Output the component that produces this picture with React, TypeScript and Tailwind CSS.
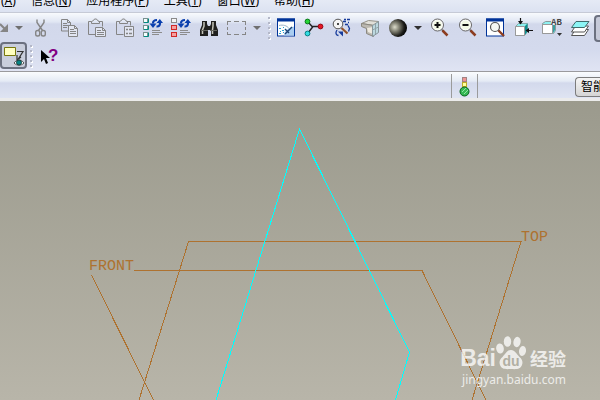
import React from 'react';

interface IconProps {
    children: React.ReactNode;
    crisp?: boolean;
}

const Icon: React.FC<IconProps> = ({ children, crisp = false }) => (
    <svg width="20" height="20" viewBox="0 0 20 20" fill="none" shapeRendering={crisp ? 'crispEdges' : 'auto'} aria-hidden="true">
        {children}
    </svg>
);

const Swap = () => (
    <g>
        <path d="M10 5.500C10 3 11.500 2 14 2" stroke="#0a3fae" strokeWidth="2.200" />
        <path d="M6.500 5.500h7l-3.500 4.500z" fill="#0a3fae" />
        <path d="M13.500 8.500c2.500.2 3.500-1 3.500-3.500" stroke="#0a3fae" strokeWidth="2.200" />
        <path d="M13.500 5h6.500l-3.200-4z" fill="#0a3fae" />
        <path d="M9 12.500h8M9 14.500h10M9 16.500h7" stroke="#8c8c8c" shapeRendering="crispEdges" />
    </g>
);

const Lens = () => (
    <g>
        <path d="M11.500 11.500l2.500 2" stroke="#555" strokeWidth="1.500" />
        <path d="M12.500 12.500l5 5" stroke="#8c3d20" strokeWidth="2.500" />
        <circle cx="7.500" cy="7" r="6" fill="#fff" stroke="#666" />
        <circle cx="7.500" cy="7" r="4.500" fill="#f2f8e4" />
    </g>
);

const editIcons = [
    {
        label: '剪切',
        icon: (
            <Icon>
                <path d="M6 1.500v3l5.500 8M13 1.500v3l-5.500 8" stroke="#858585" strokeWidth="1.400" />
                <rect x="4.700" y="12.500" width="4" height="5.500" rx="1.800" stroke="#858585" strokeWidth="1.400" />
                <rect x="10.300" y="12.500" width="4" height="5.500" rx="1.800" stroke="#858585" strokeWidth="1.400" />
            </Icon>
        ),
    },
    {
        label: '复制',
        icon: (
            <Icon>
                <path d="M2.500 1.500h6l3 3v8.500h-9zM8.500 1.500v3h3M4 5.500h4M4 7.500h6M4 9.500h4" stroke="#858585" />
                <path d="M9.500 7.500h6l3 3v8h-9z" fill="#e2e6f2" stroke="#858585" />
                <path d="M15.500 7.500v3h3M11 11.500h4M11 13.500h6M11 15.500h6" stroke="#858585" />
            </Icon>
        ),
    },
    {
        label: '粘贴',
        icon: (
            <Icon>
                <path d="M4.500 3.500h-3v13h7M11.500 3.500h4v5M4.500 5.500v-2l2-1 1-1.500h2l1 1.500 2 1v2z" stroke="#858585" />
                <path d="M8.500 9.500h7l3 3v6h-10z" fill="#e2e6f2" stroke="#858585" />
                <path d="M15.500 9.500v3h3M10 12.500h4M10 14.500h7M10 16.500h7" stroke="#858585" />
            </Icon>
        ),
    },
    {
        label: '选择性粘贴',
        icon: (
            <Icon>
                <path d="M4.500 3.500h-3v13h7M11.500 3.500h4v4M4.500 5.500v-2l2-1 1-1.500h2l1 1.500 2 1v2z" stroke="#858585" />
                <path d="M9.500 8.500h9v10h-9z" fill="#e2e6f2" stroke="#858585" />
                <path d="M11 11.500h2M14 11.500h3M14 15.500h3M11 15.500h2" stroke="#858585" strokeWidth="1.600" />
            </Icon>
        ),
    },
    {
        label: '再生',
        icon: (
            <Icon>
                {[0.5, 7.5, 14.5].map((y) => (
                    <g key={y}>
                        <rect x="0.500" y={y} width="4" height="4" fill="#f4ffff" stroke="#78918f" />
                        <path d={`M1 ${y + 4}h4.500v-4`} stroke="#008b82" />
                    </g>
                ))}
                <Swap />
            </Icon>
        ),
    },
    {
        label: '再生管理器',
        icon: (
            <Icon>
                <rect x="0.500" y="0.500" width="5" height="4" fill="#f6f6f6" stroke="#8a8a8a" />
                <rect x="0.500" y="7.500" width="5" height="4" fill="#f5a0a0" stroke="#d02828" />
                <rect x="0.500" y="14.500" width="5" height="4" fill="#f5a0a0" stroke="#d02828" />
                <Swap />
            </Icon>
        ),
    },
    {
        label: '查找',
        icon: (
            <Icon>
                <path d="M3 3h5v3l1 2h2l1-2V3h5v4l2 5v6h-7v-6H9v6H1v-6l2-5z" fill="#20201e" />
                <path d="M5 4v4l-1.500 4v4M14 4v4l-.5 4v4" stroke="#c5c5bb" strokeWidth="1.500" />
                <path d="M2 12.500h7M11 12.500h7" stroke="#66665e" />
            </Icon>
        ),
    },
    {
        label: '选择框',
        icon: (
            <Icon crisp>
                <path d="M0 3.500h4M7 3.500h5M15 3.500h4M0 16.500h4M7 16.500h5M15 16.500h4M.500 4v3M.500 9v3M.500 14v3M18.500 4v3M18.500 9v3M18.500 14v3" stroke="#858585" />
            </Icon>
        ),
    },
];

const displayIcons = [
    {
        label: '重画',
        icon: (
            <Icon>
                <rect x="1.500" y="1" width="17" height="17" fill="#fff" stroke="#003399" />
                <path d="M1 .5h18v3H1z" fill="#003399" />
                <path d="M8 17.500c0-4 4-8 10-9v9z" fill="#a9cdf1" />
                <path d="M3 7.500c4-1 8 0 10 3" stroke="#9fb4c8" />
                <path d="M9 16l7-7M9 11l4 4" stroke="#1c4475" strokeWidth="1.400" />
                <path d="M3 10.500h2M7 9.500h1M6 12.500h2M4 13.500h1M7 14.500h1M3 15.500h2" stroke="#2aa0d0" />
            </Icon>
        ),
    },
    {
        label: '旋转中心',
        icon: (
            <Icon>
                <path d="M4 4l5 5.500M8 8.500h8M9 8.500L4 15" stroke="#222" strokeWidth="1.400" />
                <circle cx="3.500" cy="3.500" r="2.400" fill="#27d335" stroke="#08771a" />
                <circle cx="16.500" cy="8.500" r="2.400" fill="#e51625" stroke="#960713" />
                <circle cx="3.500" cy="15.500" r="2.400" fill="#32dce0" stroke="#068086" />
            </Icon>
        ),
    },
    {
        label: '定向模式',
        icon: (
            <Icon>
                <circle cx="6" cy="6" r="4.800" fill="#f5f5f5" stroke="#555" />
                <path d="M5 6h2M6 5v2" stroke="#111" />
                <path d="M9.500 10l6 5.500" stroke="#925329" strokeWidth="2.200" />
                <path d="M12 1.500h2M15 1.500h3M11 3.500h3M16 4.500h1M13 6.500h3M16 7.500l1.500 3-1 3M5 12c-2 3-1 5 1.500 5.500" stroke="#163b9b" strokeWidth="1.300" />
                <path d="M6 13.500h5v5z" fill="#163b9b" />
            </Icon>
        ),
    },
    {
        label: '外观库',
        icon: (
            <Icon>
                <path d="M1.500 5.500l7-3 10 1-4 4z" fill="#e1dfd8" stroke="#959288" />
                <path d="M1.500 5.500l12 2v11l-7-3v-5l-5-2z" fill="#bcb9b1" stroke="#8b887f" />
                <path d="M7 10l6-1v7l-5-2z" fill="#eeeae0" />
                <path d="M12.500 7.500l6-4v11l-6 4z" fill="#bcd8df" stroke="#87959a" />
                <path d="M15.500 6v10M12.500 12l6-3" stroke="#91a3a8" />
            </Icon>
        ),
    },
    {
        label: '着色',
        icon: (
            <Icon>
                <defs>
                    <radialGradient id="sphere" cx="0.32" cy="0.45" r="0.65">
                        <stop offset="0" stopColor="#dcdccb" />
                        <stop offset="0.4" stopColor="#7c7c6e" />
                        <stop offset="0.8" stopColor="#1d1d19" />
                        <stop offset="1" stopColor="#080808" />
                    </radialGradient>
                </defs>
                <circle cx="10" cy="10" r="9" fill="url(#sphere)" />
            </Icon>
        ),
    },
];

const viewIcons = [
    {
        label: '放大',
        icon: (
            <Icon>
                <Lens />
                <path d="M4.500 7h6M7.500 4v6" stroke="#111" strokeWidth="2" />
            </Icon>
        ),
    },
    {
        label: '缩小',
        icon: (
            <Icon>
                <Lens />
                <path d="M4.500 7h6" stroke="#111" strokeWidth="2" />
            </Icon>
        ),
    },
    {
        label: '重新调整',
        icon: (
            <Icon>
                <rect x=".5" y="1" width="17" height="17" fill="#fff" stroke="#003399" />
                <path d="M0 .5h18v3H0z" fill="#003399" />
                <path d="M12 12l6 6" stroke="#8c3d20" strokeWidth="2.400" />
                <circle cx="9" cy="9" r="4.500" fill="#f5f7f4" stroke="#555" strokeWidth="1.200" />
            </Icon>
        ),
    },
    {
        label: '重定向',
        icon: (
            <Icon>
                <path d="M1.500 8.500l3-3h9v8l-3 4h-9z" fill="#8ef0f0" stroke="#8aa" />
                <path d="M10.500 8.500l3-3v8l-3 4z" fill="#0f8d8d" />
                <path d="M1.500 8.500h9v9h-9z" fill="#fff" stroke="#999" />
                <path d="M6.500 0v6M12 12.500h7" stroke="#111" strokeWidth="1.200" />
                <path d="M4 3h5L6.500 6.500zM15 10v5l-3.500-2.500z" fill="#111" />
            </Icon>
        ),
    },
    {
        label: '命名视图',
        icon: (
            <Icon>
                <path d="M.5 5.500l3-2h10v9l-2 3H.5z" fill="#8ef0f0" stroke="#899b9b" />
                <path d="M.5 6.500h10v9H.5z" fill="#fff" stroke="#999" />
                <path d="M11 7v8l2-3V6z" fill="#389f9f" />
                <path d="M9 0h11v7H9z" fill="#e4e8f2" />
                <text x="9" y="7" fontFamily="Liberation Mono, monospace" fontSize="9" fontWeight="700" fill="#454545">AB</text>
                <path d="M15 15h5l-2.500 3z" fill="#333" />
            </Icon>
        ),
    },
    {
        label: '层',
        icon: (
            <Icon>
                <path d="M5.500 11.500h13l-4 6H1.500z" fill="#fff" stroke="#555" />
                <path d="M5.500 8h13l-4 6H1.500z" fill="#fff" stroke="#555" />
                <path d="M6 3.500h13l-4.500 6H1.500z" fill="#8cf5f5" stroke="#426b6b" />
            </Icon>
        ),
    },
];

const menus = [
    { name: '', key: 'A' },
    { name: '信息', key: 'N' },
    { name: '应用程序', key: 'P' },
    { name: '工具', key: 'T' },
    { name: '窗口', key: 'W' },
    { name: '帮助', key: 'H' },
];

interface ToolProps {
    label: string;
    icon: React.ReactNode;
}

const Tool: React.FC<ToolProps> = ({ label, icon }) => (
    <button type="button" aria-label={label} className="flex size-7 shrink-0 items-center justify-center">
        {icon}
    </button>
);

const Caret = ({ label, color }: { label: string; color: string }) => (
    <button type="button" aria-label={label} className="mr-0.5 flex h-7 w-3 shrink-0 items-center justify-center">
        <svg width="8" height="4" viewBox="0 0 8 4" aria-hidden="true">
            <path d="M0 0h8L4 4z" fill={color} />
        </svg>
    </button>
);

const Grip = () => (
    <div className="flex w-[7px] shrink-0 flex-col items-center justify-center gap-[3px]">
        {[0, 1, 2, 3, 4].map((n) => (
            <span key={n} className="size-[2px] bg-[#b4b8c8] shadow-[1px_1px_0_#ffffff]" />
        ))}
    </div>
);

const Paw = () => (
    <svg width="30" height="34" viewBox="0 0 30 34" fill="#ffffff" aria-hidden="true">
        <ellipse cx="4" cy="12.500" rx="3.800" ry="5" transform="rotate(-8 4 12.500)" />
        <ellipse cx="11.500" cy="5.500" rx="3.700" ry="5.300" />
        <ellipse cx="21" cy="6" rx="3.600" ry="5.200" transform="rotate(12 21 6)" />
        <ellipse cx="26.500" cy="15" rx="3.500" ry="5" transform="rotate(8 26.500 15)" />
        <path d="M15 14c4 0 5.500 4 8.500 7 3 2.500 3.500 5 2.500 8-1.500 4-5 4.500-11 4-6 .5-9.500 0-11-4-1-3-.5-5.500 2.500-8C9.500 18 11 14 15 14z" />
        <text x="15" y="30" textAnchor="middle" fontFamily="Liberation Sans, sans-serif" fontSize="14" fontWeight="700" fill="#b1afa3">du</text>
    </svg>
);

export default function App() {
    return (
        <div className="flex min-h-screen flex-col overflow-hidden bg-[#9c9b8e] font-['Noto_Sans','Noto_Sans_CJK_SC',sans-serif] text-black">
            <nav className="flex h-[13px] items-end gap-[15px] overflow-hidden border-b border-[#c6cad6] bg-linear-to-b from-[#e5eaf5] to-[#dce2f1] pb-[3px] pl-px">
                {menus.map((menu) => (
                    <button key={menu.key} type="button" className="shrink-0 text-xs leading-4 whitespace-nowrap">
                        {menu.name}(<span className="underline underline-offset-1">{menu.key}</span>)
                    </button>
                ))}
            </nav>

            <header className="border-b border-[#9a9a9e] bg-[linear-gradient(to_bottom,#f8fafd_0px,#e0e6f3_9px,#d2d8eb_11px,#d4daed_36px,#e0e4f3_100%)] pt-px">
                <div className="flex">
                    <button type="button" aria-label="重做" className="flex h-7 w-[13px] shrink-0 items-center">
                        <svg width="9" height="10" viewBox="0 0 9 10" aria-hidden="true">
                            <path d="M0 1l5 5" stroke="#858585" strokeWidth="2" />
                            <path d="M8 1v8H0z" fill="#858585" />
                        </svg>
                    </button>
                    <Caret label="重做列表" color="#707070" />
                    {editIcons.map((tool) => (
                        <Tool key={tool.label} {...tool} />
                    ))}
                    <Caret label="选择方式" color="#707070" />
                    <Grip />
                    {displayIcons.map((tool) => (
                        <Tool key={tool.label} {...tool} />
                    ))}
                    <Caret label="显示样式" color="#303030" />
                    {viewIcons.map((tool) => (
                        <Tool key={tool.label} {...tool} />
                    ))}
                    <button type="button" aria-label="基准平面显示" className="mt-px h-[27px] w-7 shrink-0 rounded border-2 border-[#6c7180] bg-[#c6cad9]" />
                </div>
                <div className="flex pb-0.5">
                    <button type="button" aria-label="注释显示" className="flex h-[27px] w-[27px] shrink-0 items-center justify-center rounded border-2 border-[#6c7180] bg-[#c9cedc]">
                        <svg width="23" height="23" viewBox="0 0 23 23" fill="none" aria-hidden="true">
                            <path d="M2.500 3.500h11v8h-11z" fill="#ffffc0" stroke="#77770c" />
                            <path d="M15 7.500h6l-5 8M15 11v5l4-3" stroke="#333" strokeWidth="1.200" />
                            <path d="M12 19c3-4 7-4 10 0-3 3-7 3-10 0z" fill="#fff" stroke="#555" />
                            <circle cx="17" cy="18.500" r="2.500" fill="#078484" stroke="#174242" />
                        </svg>
                    </button>
                    <Grip />
                    <button type="button" aria-label="上下文帮助" className="ml-px flex h-[27px] w-7 shrink-0 items-center justify-center">
                        <svg width="18" height="18" viewBox="0 0 18 18" aria-hidden="true">
                            <path d="M1 3v12l3-3 2 5 2-1-2-5h4z" fill="#000" />
                            <text x="8" y="14" fontFamily="Liberation Sans, sans-serif" fontSize="17" fontWeight="700" fill="#820082">?</text>
                        </svg>
                    </button>
                </div>
            </header>

            <div className="flex h-[29px] justify-end border-b-[3px] border-[#ebebeb] bg-[linear-gradient(to_bottom,#fafcfe_0px,#e5ebf5_9px,#d3d9ec_11px,#dfe4f2_100%)]">
                <div className="mt-0.5 flex w-[27px] items-center justify-center border-x border-[#9b9b9b]">
                    <svg width="12" height="21" viewBox="0 0 12 21" role="img" aria-label="再生状态">
                        <rect x="3.500" y="1.500" width="4" height="4" fill="#ee9494" stroke="#a08383" />
                        <rect x="3.500" y="6.500" width="4" height="4" fill="#ffff9c" stroke="#bcaa27" />
                        <circle cx="5.500" cy="15.500" r="4.500" fill="#35b953" stroke="#07601c" />
                        <path d="M3 16l4-4M5 18l4-4" stroke="#93e5a4" />
                    </svg>
                </div>
                <div className="w-[97px]" />
                <select
                    aria-label="选择过滤器"
                    className="mt-[5px] h-5 w-[25px] appearance-none rounded-l border border-r-0 border-[#7c7c7c] bg-linear-to-b from-[#f5f5f5] to-[#d5d5d5] pl-[5px] text-xs leading-4"
                >
                    <option>智能</option>
                </select>
            </div>

            <main className="relative flex grow flex-col justify-end bg-linear-to-b from-[#9b9a8d] to-[#b8b5a9]">
                <svg className="absolute inset-0 size-full" fill="none" shapeRendering="crispEdges" role="img" aria-label="基准平面">
                    <g stroke="#ae7230">
                        <path d="M139 299L188.500 140.500H521L472 299" />
                        <path d="M134 169.500H422L486 299M91.500 174L153.500 299" />
                    </g>
                    <path d="M216 299L299.500 28L409.500 251L395.500 299" stroke="#00ffff" />
                    <g fill="#ae7230" fontFamily="Liberation Mono, monospace" fontSize="15">
                        <text x="89" y="169">FRONT</text>
                        <text x="521" y="140">TOP</text>
                    </g>
                </svg>
                <div className="relative mr-[34px] mb-3 flex flex-col items-end gap-0.5 text-white opacity-75">
                    <div className="flex items-end">
                        <span className="font-['Liberation_Sans',sans-serif] text-[23px] leading-6 font-bold">Bai</span>
                        <Paw />
                        <span className="ml-1 pb-0.5 font-['Noto_Sans_CJK_SC',sans-serif] text-lg leading-5 font-bold">经验</span>
                    </div>
                    <span className="text-xs leading-4">jingyan.baidu.com</span>
                </div>
            </main>
        </div>
    );
}
